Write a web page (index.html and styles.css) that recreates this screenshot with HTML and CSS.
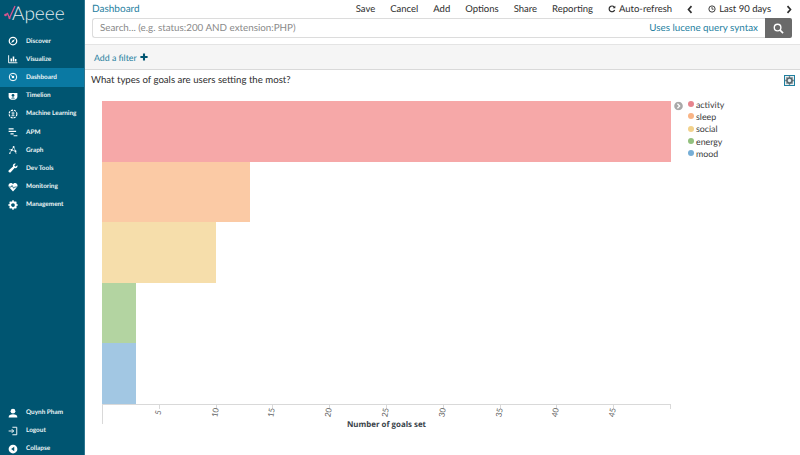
FILE: index.html
```html
<!DOCTYPE html>
<html lang="en">
<head>
<meta charset="utf-8">
<title>Dashboard</title>
<link rel="stylesheet" href="styles.css">
</head>
<body>
<div class="app">
  <nav class="sidebar">
    <div class="logo">
      <svg class="logo-mark" viewBox="0 0 16 18" width="16" height="18"><path d="M1 10 L3.500 8.500 L5.500 13 L11 1" fill="none" stroke="#d9558f" stroke-width="1.300"/><circle cx="1.500" cy="10" r="1.300" fill="#d9558f"/><circle cx="5.500" cy="13" r="1.100" fill="#d9558f"/></svg>
      <span class="logo-text">Apeee</span>
    </div>
    <ul class="nav">
      <li class="nav-item"><svg class="ico" viewBox="0 0 16 16"><circle cx="8" cy="8" r="6" fill="none" stroke="#fff" stroke-width="2"/><path d="M11 5 L9 9 L5 11 L7 7Z" fill="#fff"/></svg><span>Discover</span></li>
      <li class="nav-item"><svg class="ico" viewBox="0 0 16 16"><path d="M1 2v12h14" fill="none" stroke="#fff" stroke-width="1.500"/><path d="M4 7h2.500v5H4zM7.500 4H10v8H7.500zM11 8h2.500v4H11z" fill="#fff"/></svg><span>Visualize</span></li>
      <li class="nav-item active"><svg class="ico" viewBox="0 0 16 16"><circle cx="8" cy="8" r="6" fill="none" stroke="#fff" stroke-width="1.600"/><path d="M8 8 L5 5.500" stroke="#fff" stroke-width="1.600"/><circle cx="8" cy="8" r="2" fill="#fff"/></svg><span>Dashboard</span></li>
      <li class="nav-item"><svg class="ico" viewBox="0 0 16 16"><path d="M1 3h14v6c0 3-3 5-7 5s-7-2-7-5z" fill="#fff"/><circle cx="8" cy="7" r="2.200" fill="#005571"/><path d="M5 12c1-2 5-2 6 0z" fill="#005571"/></svg><span>Timelion</span></li>
      <li class="nav-item"><svg class="ico" viewBox="0 0 16 16"><circle cx="8" cy="8" r="6.200" fill="none" stroke="#fff" stroke-width="1.800" stroke-dasharray="3.500 1.500"/><path d="M8 4v8M5.500 6.500h5M5.500 10h5" stroke="#fff" stroke-width="1.200"/></svg><span>Machine Learning</span></li>
      <li class="nav-item"><svg class="ico" viewBox="0 0 16 16"><path d="M1 3h8M1 7h12M4 11h5M9 14h6" stroke="#fff" stroke-width="1.800"/></svg><span>APM</span></li>
      <li class="nav-item"><svg class="ico" viewBox="0 0 16 16"><path d="M3 13 L6 8 L9 3 M6 8 L12 10 L13 14 M6 8 L2 7 M12 10 L9 3" stroke="#fff" stroke-width="1" fill="none"/><circle cx="9" cy="3" r="1.500" fill="#fff"/><circle cx="6" cy="8" r="1.500" fill="#fff"/><circle cx="12" cy="10" r="1.500" fill="#fff"/><circle cx="3" cy="13" r="1.200" fill="#fff"/></svg><span>Graph</span></li>
      <li class="nav-item"><svg class="ico" viewBox="0 0 16 16"><path d="M15 3.500 L12 6 L10 4 L12.500 1 C9.500 0 7 2.500 8 5.500 L1 12 C0 14 2 16 4 15 L10.500 8 C13.500 9 16 6.500 15 3.500Z" fill="#fff"/></svg><span>Dev Tools</span></li>
      <li class="nav-item"><svg class="ico" viewBox="0 0 16 16"><path d="M8 15 L1.500 8 C-0.500 4.500 2 1.500 4.500 1.500 C6 1.500 7.300 2.300 8 3.500 C8.700 2.300 10 1.500 11.500 1.500 C14 1.500 16.500 4.500 14.500 8Z" fill="#fff"/><path d="M1 8h4l1.500-2.500L9 10l1.500-2H15" fill="none" stroke="#005571" stroke-width="1.200"/></svg><span>Monitoring</span></li>
      <li class="nav-item"><svg class="ico" viewBox="0 0 16 16"><circle cx="8" cy="8" r="4.500" fill="none" stroke="#fff" stroke-width="3"/><path d="M8 0.500v3M8 12.500v3M0.500 8h3M12.500 8h3M2.700 2.700l2.100 2.100M11.200 11.200l2.100 2.100M2.700 13.300l2.100-2.100M11.200 4.800l2.100-2.100" stroke="#fff" stroke-width="2.400"/></svg><span>Management</span></li>
    </ul>
    <ul class="nav nav-bottom">
      <li class="nav-item"><svg class="ico" viewBox="0 0 16 16"><circle cx="8" cy="5" r="3.800" fill="#fff"/><path d="M1 15c0-4 3-5 7-5s7 1 7 5z" fill="#fff"/></svg><span>Quynh Pham</span></li>
      <li class="nav-item"><svg class="ico" viewBox="0 0 16 16"><path d="M7 2h7v12H7" fill="none" stroke="#fff" stroke-width="1.500"/><path d="M1 8h8M6 5l3 3-3 3" fill="none" stroke="#fff" stroke-width="1.500"/></svg><span>Logout</span></li>
      <li class="nav-item"><svg class="ico" viewBox="0 0 16 16"><circle cx="8" cy="8" r="7" fill="#fff"/><path d="M10 4.500v7L5 8z" fill="#005571"/></svg><span>Collapse</span></li>
    </ul>
  </nav>
  <main class="main">
    <header class="topbar">
      <span class="crumb">Dashboard</span>
      <div class="menu">
        <span>Save</span><span>Cancel</span><span>Add</span><span>Options</span><span>Share</span><span>Reporting</span>
        <span class="with-ico"><svg class="mini" viewBox="0 0 12 12"><path d="M10 7.500A4.300 4.300 0 1 1 9.300 3" fill="none" stroke="#2d2d2d" stroke-width="1.800"/><path d="M11 1v4H7z" fill="#2d2d2d"/></svg>Auto-refresh</span>
        <svg class="chev" viewBox="0 0 8 12"><path d="M6 1.500 L2 6 L6 10.500" fill="none" stroke="#2d2d2d" stroke-width="2.200"/></svg>
        <span class="with-ico"><svg class="mini" viewBox="0 0 12 12"><circle cx="6" cy="6" r="4.700" fill="none" stroke="#2d2d2d" stroke-width="1.400"/><path d="M6 3v3.300h2.500" fill="none" stroke="#2d2d2d" stroke-width="1.200"/></svg>Last 90 days</span>
        <svg class="chev" viewBox="0 0 8 12"><path d="M2 1.500 L6 6 L2 10.500" fill="none" stroke="#2d2d2d" stroke-width="2.200"/></svg>
      </div>
    </header>
    <div class="search-row">
      <div class="search-box">
        <span class="placeholder">Search... (e.g. status:200 AND extension:PHP)</span>
        <span class="syntax">Uses lucene query syntax</span>
      </div>
      <div class="search-btn"><svg viewBox="0 0 12 12" width="11" height="11"><circle cx="5" cy="5" r="3.600" fill="none" stroke="#fff" stroke-width="1.500"/><path d="M7.700 7.700 L11 11" stroke="#fff" stroke-width="1.800"/></svg></div>
    </div>
    <div class="filter-bar">Add a filter <svg viewBox="0 0 10 10" width="8" height="8"><path d="M5 0.500v9M0.500 5h9" stroke="#005571" stroke-width="2.600"/></svg></div>
    <section class="panel">
      <div class="panel-head">
        <h2 class="panel-title">What types of goals are users setting the most?</h2>
        <div class="gear"><svg viewBox="0 0 16 16" width="9" height="9"><circle cx="8" cy="8" r="4.500" fill="none" stroke="#5a6a70" stroke-width="3"/><path d="M8 0.500v3M8 12.500v3M0.500 8h3M12.500 8h3M2.700 2.700l2.100 2.100M11.200 11.200l2.100 2.100M2.700 13.300l2.100-2.100M11.200 4.800l2.100-2.100" stroke="#5a6a70" stroke-width="2.400"/></svg></div>
      </div>
      <div class="chart">
        <div class="plot">
          <div class="bars">
            <div class="bar c-activity" style="width:100%"></div>
            <div class="bar c-sleep" style="width:26%"></div>
            <div class="bar c-social" style="width:20%"></div>
            <div class="bar c-energy" style="width:6%"></div>
            <div class="bar c-mood" style="width:6%"></div>
          </div>
          <div class="axis">
            <div class="tick"><span>5</span></div><div class="tick"><span>10</span></div><div class="tick"><span>15</span></div><div class="tick"><span>20</span></div><div class="tick"><span>25</span></div><div class="tick"><span>30</span></div><div class="tick"><span>35</span></div><div class="tick"><span>40</span></div><div class="tick"><span>45</span></div><div class="tick tick-end"></div>
          </div>
          <div class="axis-title">Number of goals set</div>
        </div>
        <div class="legend-toggle"><svg viewBox="0 0 10 10" width="9" height="9"><circle cx="5" cy="5" r="4.800" fill="#a9a9a9"/><path d="M3.800 2.500 L6.300 5 L3.800 7.500" fill="none" stroke="#fff" stroke-width="1.400"/></svg></div>
        <ul class="legend">
          <li><i class="dot d-activity"></i>activity</li>
          <li><i class="dot d-sleep"></i>sleep</li>
          <li><i class="dot d-social"></i>social</li>
          <li><i class="dot d-energy"></i>energy</li>
          <li><i class="dot d-mood"></i>mood</li>
        </ul>
      </div>
    </section>
  </main>
</div>
</body>
</html>
```
FILE: styles.css
```css
* { box-sizing: border-box; }
html, body { margin: 0; height: 100%; overflow: hidden; }
body { font-family: "Lato", "Open Sans", sans-serif; background: #fff; color: #2d2d2d; text-rendering: geometricPrecision; }
ul { list-style: none; margin: 0; padding: 0; }
.app { display: flex; width: 800px; height: 455px; }

.sidebar { width: 85px; flex: none; background: #005571; color: #fff; display: flex; flex-direction: column; border-right: 1px solid #2d7690; }
.logo { height: 32px; flex: none; padding: 2px 0 0 12px; position: relative; }
.logo-mark { position: absolute; left: 4px; top: 5px; }
.logo-text { font-family: "Lato", sans-serif; font-weight: 300; font-size: 19px; line-height: 24px; color: #e6eef1; }
.nav-item { height: 18.200px; display: flex; align-items: center; padding-left: 8px; font-size: 6.400px; font-weight: 700; white-space: nowrap; color: #eef5f7; font-family: "Lato", sans-serif; }
.nav-item.active { background: #0a79a3; }
.ico { width: 10px; height: 10px; flex: none; margin-right: 8px; }
.nav-bottom { margin-top: auto; margin-bottom: -3px; }

.main { flex: 1; min-width: 0; display: flex; flex-direction: column; }
.topbar { height: 18px; display: flex; align-items: center; justify-content: space-between; padding: 0 8px 0 7px; font-size: 9.500px; }
.crumb { color: #1f7f9f; font-size: 10px; }
.menu { display: flex; align-items: center; gap: 15px; }
.with-ico { display: flex; align-items: center; gap: 3px; }
.mini { width: 8px; height: 8px; }
.chev { width: 6px; height: 9px; }

.search-row { display: flex; padding: 0 8px 0 7px; height: 20px; }
.search-box { flex: 1; display: flex; justify-content: space-between; align-items: center; border: 1px solid #dcdcdc; border-right: 0; border-radius: 3px 0 0 3px; padding: 0 7px; font-size: 9.800px; }
.placeholder { color: #8a8a8a; }
.syntax { color: #1f7f9f; }
.search-btn { width: 27px; background: #6a6a6a; border-radius: 0 2px 2px 0; display: flex; align-items: center; justify-content: center; }

.filter-bar { margin-top: 6px; height: 26px; background: #f5f5f5; border-top: 1px solid #e4e4e4; border-bottom: 1px solid #d9d9d9; padding-left: 9px; display: flex; align-items: center; gap: 3px; font-size: 8.800px; color: #1f7f9f; }

.panel { flex: 1; min-height: 0; display: flex; flex-direction: column; }
.panel-head { display: flex; justify-content: space-between; padding: 3px 5px 0 6px; height: 31px; }
.panel-title { margin: 0; font-size: 9.650px; font-weight: 400; line-height: 15px; color: #2d2d2d; }
.gear { width: 11px; height: 11px; margin-top: 1.500px; border: 1px solid #1f7f9f; background: #e8eef0; display: flex; align-items: center; justify-content: center; }

.chart { display: flex; align-items: flex-start; padding-left: 17px; }
.plot { width: 569px; flex: none; }
.bars { height: 303px; display: flex; flex-direction: column; }
.bar { flex: 1; }
.c-activity { background: #f6a8a8; }
.c-sleep { background: #fbcaa5; }
.c-social { background: #f6deab; }
.c-energy { background: #b3d4a1; }
.c-mood { background: #a2c7e3; }

.axis { display: flex; height: 20px; border-top: 1px solid #d9d9d9; border-left: 1px solid #d9d9d9; }
.tick { flex: 1; height: 4px; border-right: 1px solid #d9d9d9; position: relative; }
.tick span { position: absolute; right: -5px; top: 2px; width: 11px; font-size: 8px; line-height: 11px; color: #5f5f5f; transform: rotate(-80deg); text-align: center; }
.axis-title { text-align: center; font-family: "Open Sans", sans-serif; font-size: 7.900px; font-weight: 700; line-height: 12px; margin-top: -5px; color: #39434a; }

.legend-toggle { margin: 0 0 0 3px; height: 9px; line-height: 0; transform: translateY(0.500px); }
.legend { margin-left: 5px; font-size: 8.800px; color: #3a3a3a; margin-top: -3px; }
.legend li { display: flex; align-items: center; height: 12.300px; gap: 2px; }
.dot { width: 6px; height: 6px; border-radius: 50%; flex: none; }
.d-activity { background: #e7848d; }
.d-sleep { background: #f9b485; }
.d-social { background: #f2d28c; }
.d-energy { background: #93c07e; }
.d-mood { background: #76aed6; }
```
